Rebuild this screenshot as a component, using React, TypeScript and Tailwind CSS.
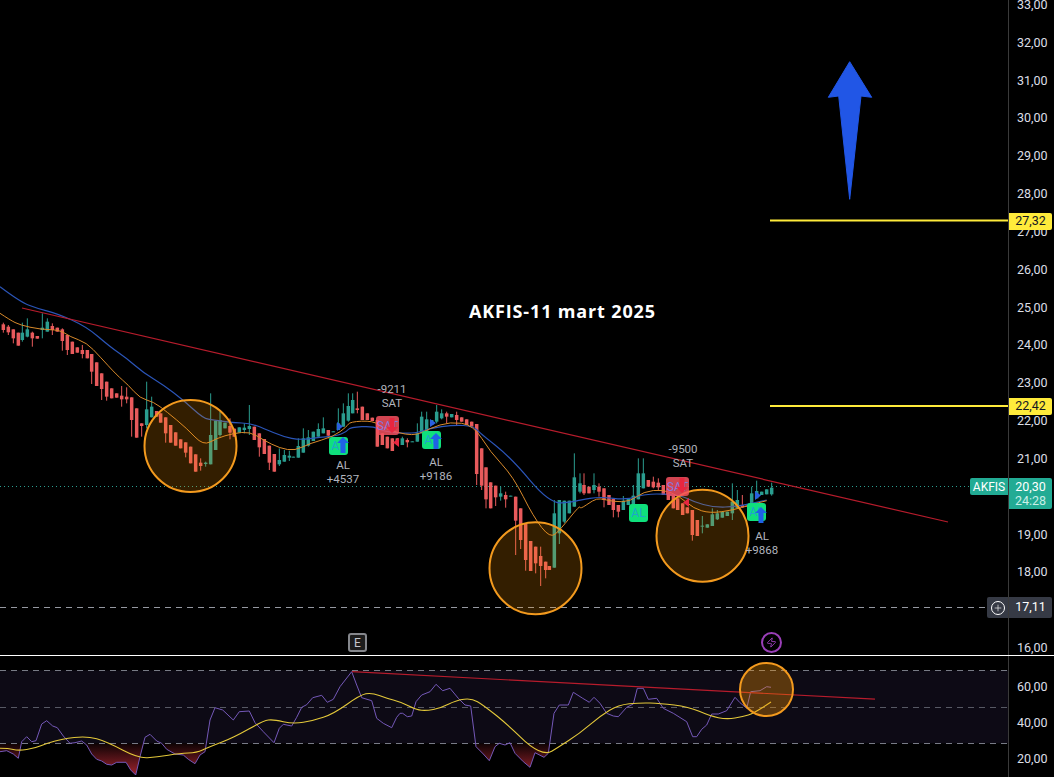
import { Plus, Zap } from 'lucide-react';

type Pt = [number, number];
// [x, up, bodyTop, bodyBottom, wickTop, wickBottom], read off 3x crops
type Row = [number, number, number, number, number?, number?];

const scale = (ox: number, oy: number, pts: Pt[]): Pt[] => pts.map(([x, y]) => [ox + x / 3, oy + y / 3]);
const toPoints = (pts: Pt[]) => pts.map(([x, y]) => x.toFixed(1) + ',' + y.toFixed(1)).join(' ');
// rounds the corners: goes through the midpoints, with each point as control
const smooth = (pts: Pt[]) => {
  let d = 'M' + pts[0][0].toFixed(1) + ' ' + pts[0][1].toFixed(1);
  for (let i = 1; i < pts.length - 1; i++) {
    const mx = (pts[i][0] + pts[i + 1][0]) / 2;
    const my = (pts[i][1] + pts[i + 1][1]) / 2;
    d += 'Q' + pts[i][0].toFixed(1) + ' ' + pts[i][1].toFixed(1) + ' ' + mx.toFixed(1) + ' ' + my.toFixed(1);
  }
  const last = pts[pts.length - 1];
  return d + 'L' + last[0].toFixed(1) + ' ' + last[1].toFixed(1);
};

const part1: Row[] = [
  [10,0,133,150,128,158],[25,0,140,157,135,165],[40,0,148,175,148,190],[55,0,158,197],[67,1,158,180,128,185],[82,1,148,170,115,172],
  [97,0,158,175,155,200],[112,0,168,176],[127,1,143,150,100,175],[142,1,125,155,115,155],[157,0,138,150,130,165],[172,0,143,155],
  [187,0,148,183,145,212],[202,0,165,210,165,225],[217,0,185,222],[232,0,202,218],[247,0,210,222,195,235],[262,0,210,235],
  [275,0,222,275,222,312],[290,0,247,318],[305,0,280,327,280,360],[320,0,305,350,305,362],[335,0,325,355],[350,0,340,353],
  [365,0,347,358,318,380],[380,0,350,358,322,370],[395,0,352,420,352,470],[410,0,385,473],[425,0,430,438,430,470],[440,1,388,435,305,445],
  [455,1,380,412,350,412],[470,0,393,410],[482,0,400,428],[497,0,412,460,412,488],[512,0,435,488],[527,0,457,497],[542,0,478,505],
  [557,0,487,518,487,532],[572,0,500,550],[587,0,523,575],[602,0,548,558,535,572],[617,1,548,552,545,560],[632,1,465,553,340,553],
  [647,1,422,510],[660,1,420,465,395,470],[675,1,428,445],[690,0,438,458,415,478],[703,0,446,470],[718,1,442,458],[733,1,443,450,430,460],
  [748,1,438,447,375,465],[763,0,440,480],[778,0,460,502,460,530],[793,0,477,522],[808,0,497,548,497,570],[823,0,522,575],
  [838,1,540,553,505,558],[853,1,525,545,510,545],[868,1,527,533,512,543],[880,1,530,532],[895,1,498,533,475,533],[910,1,475,518,445,518],
  [925,1,472,497,450,500],[940,1,455,483],[955,1,447,470,430,470],[970,1,445,460,412,460],[985,0,450,467,450,475],[1000,1,454,456],
  [1015,1,430,450,385,450],[1030,1,400,440,370,440],[1045,1,378,422,340,425],[1058,1,360,400,340,400],
];
const part2: Row[] = [
  [52,0,115,120,65,130],[67,0,110,150],[82,0,130,150],[97,0,143,153],[112,0,150,230],[127,0,190,225],[142,0,200,235],[157,0,205,243],
  [172,0,205,215],[187,1,205,225,200,225],[202,0,210,217,205,232],[217,1,214,216],[232,1,190,215,160,215],[245,1,140,190,125,190],
  [260,1,148,185,125,190],[275,1,150,165],[290,1,125,155,105,160],[305,1,130,145,118,148],[320,0,130,140,125,160],[335,1,132,142],
  [350,0,135,150,125,165],[365,0,142,155],[380,0,148,165],[395,0,155,170],[410,0,162,312,162,345],[425,0,235,347,235,360],
  [438,0,292,388,292,415],[452,0,337,415],[467,0,347,382,347,408],[482,1,370,380,350,392],[497,0,375,388,365,413],[512,1,377,379],
  [527,0,380,452,380,555],[542,0,415,510,415,537],[557,0,460,570,460,602],[572,0,513,603],[587,0,530,580,530,610],[602,0,558,588,530,648],
  [617,0,575,600,575,625],[628,0,588,600],[643,1,430,593,390,593],[658,1,390,490,390,522],[673,1,392,455,392,460],[688,1,392,430],
  [703,1,322,410,250,410],
];
const part3: Row[] = [
  [0,1,160,185,130,190],[12,0,165,190,130,195],[27,0,170,190],[42,1,165,180,130,190],[57,0,170,185,160,200],[72,0,175,210,175,232],
  [87,0,195,225],[100,0,207,240,207,262],[115,0,225,245,225,262],[130,1,212,240,198,240],[145,1,205,225],[160,1,197,225,165,230],
  [175,1,130,208,85,208],[190,1,130,175,85,175],[205,0,150,170],[220,0,155,172,140,175],[235,0,158,172,145,180],[250,0,165,195],
  [265,0,190,210],[280,0,195,235],[293,0,205,240],[308,0,220,255],[322,0,232,250],[337,0,240,315,240,332],[352,0,270,318],
  [367,1,287,289,258,310],[382,1,283,293],[397,1,253,288,235,288],[412,1,250,268,240,270],[427,1,245,263],[442,1,245,258],
  [457,1,215,250,160,270],[472,1,210,235,180,235],[487,0,225,232,195,232],[500,0,227,229],[515,1,190,220,170,220],[530,1,183,205,152,205],
  [545,1,185,195],[560,1,178,193],[575,1,173,193,158,197],
];
const candles = [
  ...part1.map((r) => ({ r, ox: 0, oy: 280 })),
  ...part2.map((r) => ({ r, ox: 340, oy: 370 })),
  ...part3.map((r) => ({ r, ox: 580, oy: 430 })),
];

const blue: Pt[] = [
  ...scale(0, 280, [[0,20],[60,65],[110,85],[170,100],[260,140],[330,200],[380,235],[430,278],[490,315],[550,360],[610,415],[640,420],[700,428],[750,430],[790,445],[850,470],[900,480],[960,472],[1010,468],[1040,455]]),
  ...scale(340, 370, [[30,172],[100,168],[130,185],[220,192],[270,175],[340,165],[400,168],[420,190],[510,260],[630,402],[700,395]]),
  ...scale(580, 430, [[0,210],[60,200],[140,210],[200,190],[300,195],[340,215],[400,232],[470,230],[560,210]]),
];
const orange: Pt[] = [
  ...scale(0, 280, [[0,100],[30,120],[60,135],[120,148],[180,150],[210,170],[260,188],[300,230],[350,285],[385,315],[420,355],[460,365],[500,395],[560,445],[610,497],[650,475],[700,460],[750,455],[790,480],[840,505],[885,512],[930,490],[1000,470],[1040,440]]),
  ...scale(340, 370, [[30,155],[100,152],[130,175],[220,200],[270,175],[330,155],[400,165],[450,245],[520,320],[580,440],[630,505],[660,480],[720,405]]),
  ...scale(580, 430, [[0,238],[40,210],[60,205],[100,215],[150,215],[190,185],[250,178],[300,200],[340,235],[390,250],[460,240],[510,225],[560,212]]),
];
const rsi: Pt[] = [
  ...scale(0, 630, [[0,365],[20,362],[40,372],[55,385],[65,335],[80,320],[95,335],[108,332],[125,282],[140,272],[158,288],[172,293],[190,318],[210,340],[225,338],[245,333],[260,345],[275,372],[290,388],[305,393],[320,403],[335,405],[350,397],[378,397],[392,420],[407,435],[420,380],[435,322],[450,313],[470,333],[485,340],[500,358],[525,372],[550,375],[565,388],[585,401],[600,375],[615,365],[630,270],[645,233],[668,240],[700,270],[718,245],[748,243],[765,278],[790,305],[822,338],[838,295],[850,283],[875,288],[890,262],[905,232],[920,224],[938,203],[965,196],[982,217],[1000,208],[1020,170],[1055,125],[1070,165],[1085,203],[1115,212],[1130,265],[1150,280],[1175,293],[1190,262]]),
  ...scale(400, 630, [[0,250],[8,250],[22,260],[35,258],[48,215],[65,195],[90,185],[108,163],[128,182],[150,175],[175,205],[195,225],[212,228],[228,350],[250,372],[268,392],[285,350],[298,340],[315,345],[330,338],[345,370],[370,395],[390,412],[405,368],[432,382],[445,370],[462,250],[478,225],[505,225],[520,187],[548,205],[568,217],[582,202],[600,220],[620,250],[640,258],[655,260],[680,232],[700,222],[712,175],[730,175],[745,208],[770,205],[790,235],[820,250],[860,275],[878,320],[890,320],[905,298],[920,285],[935,252],[955,252],[980,242],[1005,202],[1020,218],[1040,235],[1052,185],[1080,182],[1100,170],[1113,172]]),
];
const rsiMa: Pt[] = [
  ...scale(0, 630, [[0,355],[25,355],[55,362],[105,355],[140,340],[185,327],[260,318],[320,335],[415,385],[470,381],[540,370],[590,368],[625,352],[700,323],[790,272],[820,268],[880,282],[940,272],[1000,252],[1080,195],[1115,188],[1160,205]]),
  ...scale(400, 630, [[0,215],[50,240],[80,242],[120,235],[170,210],[215,205],[250,225],[330,290],[390,350],[440,373],[470,355],[540,310],[600,258],[655,225],[720,218],[780,220],[865,230],[930,258],[980,268],[1030,260],[1060,250],[1113,216]]),
];

// 20,00 and 17,00 sit under the price tags, their rows stay empty
const axisValues = [33, 32, 31, 30, 29, 28, 27, 26, 25, 24, 23, 22, 21, 0, 19, 18, 0, 16];

const upArrow = (cx: number, t: number, b: number) =>
  'M' + cx + ' ' + t + 'L' + (cx + 6) + ' ' + (t + 6) + 'H' + (cx + 2.5) + 'V' + b + 'H' + (cx - 2.5) + 'V' + (t + 6) + 'H' + (cx - 6) + 'Z';
const downArrow = (cx: number, t: number, b: number) =>
  'M' + cx + ' ' + b + 'L' + (cx + 6) + ' ' + (b - 6) + 'H' + (cx + 2.5) + 'V' + t + 'H' + (cx - 2.5) + 'V' + (b - 6) + 'H' + (cx - 6) + 'Z';

const AlBox = ({ x, y }: { x: number; y: number }) => (
  <div className="absolute flex h-[18px] w-[19px] items-center justify-center rounded-[3px] bg-[#0fe07c] text-[12px] text-[#1fa5cc]" style={{ left: x, top: y }}>
    AL
  </div>
);
const SatBox = ({ x, y }: { x: number; y: number }) => (
  <div className="absolute flex h-[19px] w-[23px] items-center justify-center rounded-[3px] bg-[#f4515f]/85 text-[12px] text-[#8d74dc]" style={{ left: x, top: y }}>
    SAT
  </div>
);
const Note = ({ x, y, lines }: { x: number; y: number; lines: string[] }) => (
  <div className="absolute w-[60px] text-center text-[11.5px] leading-[14px] text-[#b2b5be]" style={{ left: x - 30, top: y }}>
    {lines.map((l) => (
      <div key={l}>{l}</div>
    ))}
  </div>
);

export default function App() {
  return (
    <div className="flex h-[777px] w-[1054px] flex-col overflow-hidden bg-black font-['Roboto',sans-serif] text-[12.5px] text-[#dcdfe6]">
      <div className="relative flex h-[655px] shrink-0">
        <div className="h-full w-[1008px] shrink-0">
          <svg width="1008" height="655" className="block">
            <line x1="0" y1="486.5" x2="970" y2="486.5" stroke="#2a9d8f" strokeWidth="1" strokeDasharray="1 3" />
            <line x1="0" y1="607.5" x2="987" y2="607.5" stroke="#9598a1" strokeWidth="1" strokeDasharray="6 5" />
            <line x1="770" y1="220.5" x2="1008" y2="220.5" stroke="#ffeb3b" strokeWidth="2" />
            <line x1="770" y1="406" x2="1008" y2="406" stroke="#ffeb3b" strokeWidth="2" />
            {candles.map(({ r, ox, oy }, i) => {
              const [zx, up, top, bottom, wt, wb] = r;
              const x = ox + zx / 3;
              const color = up ? '#2a9d8f' : '#e85a5c';
              return (
                <g key={i} fill={color}>
                  <rect x={x - 0.5} y={oy + (wt ?? top) / 3} width="1" height={((wb ?? bottom) - (wt ?? top)) / 3} />
                  <rect x={x - 1.75} y={oy + top / 3} width="3.5" height={Math.max((bottom - top) / 3, 1)} />
                </g>
              );
            })}
            <path d={smooth(blue)} fill="none" stroke="#2b55b8" strokeWidth="1.2" />
            <path d={smooth(orange)} fill="none" stroke="#d98a2b" strokeWidth="1" />
            <line x1="22" y1="308" x2="948" y2="522" stroke="#b71c2c" strokeWidth="1.2" />
            <circle cx="190.5" cy="446" r="46" fill="#ff9800" fillOpacity="0.2" stroke="#f39a1e" strokeWidth="2" />
            <circle cx="535.5" cy="568.3" r="46" fill="#ff9800" fillOpacity="0.2" stroke="#f39a1e" strokeWidth="2" />
            <circle cx="702.5" cy="535.7" r="46" fill="#ff9800" fillOpacity="0.2" stroke="#f39a1e" strokeWidth="2" />
            <path d="M849.7 61.7L871.7 97.3L861 96L849.7 199.3L838.7 96L828.3 97.3Z" fill="#2156e6" stroke="#2156e6" strokeWidth="1" strokeLinejoin="round" />
          </svg>
        </div>

        <div className="h-full w-[46px] shrink-0 overflow-hidden border-l border-[#3a3a3a]">
          <div className="-mt-[14px] flex flex-col pl-2">
            {axisValues.map((v, i) => (
              <div key={i} className="flex h-[37.83px] shrink-0 items-center leading-[10px]">
                {v ? v + ',00' : ''}
              </div>
            ))}
          </div>
        </div>

        <AlBox x={329} y={437} />
        <AlBox x={422} y={431} />
        <AlBox x={629} y={504} />
        <AlBox x={747} y={503} />
        <SatBox x={376} y={416} />
        <SatBox x={666} y={477} />

        <svg width="1008" height="655" className="absolute left-0 top-0">
          <path d={upArrow(343, 437, 453)} fill="#1f62e6" />
          <path d={upArrow(436, 433, 449)} fill="#1f62e6" />
          <path d={upArrow(761, 507, 523)} fill="#1f62e6" />
          <path d={downArrow(392, 418, 433)} fill="#e8263f" />
          <path d={downArrow(682, 478, 493)} fill="#e8263f" />
          <path d="M337 422L343 426.5L337 431Z" fill="#2a5fe0" />
          <path d="M430 419L436 423L430 427Z" fill="#2a5fe0" />
          <path d="M755 491L761 495.5L755 500Z" fill="#2a5fe0" />
          <path d="M399 438L393 442.5L399 447Z" fill="#e8263f" />
          <path d="M689 498L683 502.5L689 507Z" fill="#e8263f" />
        </svg>

        <Note x={343} y={458} lines={['AL', '+4537']} />
        <Note x={436} y={455} lines={['AL', '+9186']} />
        <Note x={762} y={529} lines={['AL', '+9868']} />
        <Note x={392} y={382} lines={['-9211', 'SAT']} />
        <Note x={683} y={442} lines={['-9500', 'SAT']} />

        <div className="absolute left-[469px] top-[299px] font-['Open_Sans',sans-serif] text-[18px] font-bold leading-6 tracking-[0.85px] text-white">
          AKFIS-11 mart 2025
        </div>

        <div className="absolute left-[1009px] top-[213px] flex h-[17px] w-[43px] items-center justify-center rounded-r-[2px] bg-[#ffeb3b] text-[#131722]">27,32</div>
        <div className="absolute left-[1009px] top-[398px] flex h-[17px] w-[43px] items-center justify-center rounded-r-[2px] bg-[#ffeb3b] text-[#131722]">22,42</div>

        <div className="absolute left-[970px] top-[478px] flex items-start gap-px text-white">
          <div className="flex h-[17px] w-[38px] items-center justify-center rounded-l-[2px] bg-[#22ab94] text-[12px]">AKFIS</div>
          <div className="flex h-[31px] w-[43px] flex-col items-center justify-center rounded-r-[2px] bg-[#22ab94] leading-[14px]">
            <span>20,30</span>
            <span className="text-[#c9efe8]">24:28</span>
          </div>
        </div>

        <div className="absolute left-[987px] top-[597px] flex h-[21px] gap-px text-white">
          <div className="flex w-[21px] items-center justify-center rounded-l-[2px] bg-[#363a45]">
            <span className="flex h-[14px] w-[14px] items-center justify-center rounded-full border border-white">
              <Plus size={10} strokeWidth={1.5} color="#ffffff" />
            </span>
          </div>
          <div className="flex w-[43px] items-center justify-center rounded-r-[2px] bg-[#363a45]">17,11</div>
        </div>

        <div className="absolute left-[348px] top-[633px] flex h-[19px] w-[19px] items-center justify-center rounded-[3px] border-2 border-[#85878c] bg-[#1c1c1c] text-[12px] text-[#c4c6cc]">E</div>
        <div className="absolute left-[761px] top-[632px] flex h-[21px] w-[21px] items-center justify-center rounded-full border-2 border-[#9a3fb8] text-[#9a3fb8]">
          <Zap size={11} strokeWidth={2} />
        </div>
      </div>

      <div className="h-px shrink-0 bg-white" />

      <div className="flex h-[121px] shrink-0">
        <div className="h-full w-[1008px] shrink-0">
          <svg width="1008" height="121" viewBox="0 656 1008 121" className="block">
            <defs>
              <linearGradient id="oversold" gradientUnits="userSpaceOnUse" x1="0" y1="743" x2="0" y2="777">
                <stop offset="0" stopColor="#f23645" stopOpacity="0.05" />
                <stop offset="1" stopColor="#f23645" stopOpacity="0.7" />
              </linearGradient>
              <clipPath id="below30">
                <rect x="0" y="743.3" width="1008" height="34" />
              </clipPath>
            </defs>
            <rect x="0" y="670.3" width="1008" height="73" fill="#0d0a15" />
            <polygon points={'0,743.3 ' + toPoints(rsi) + ' 771,743.3'} fill="url(#oversold)" clipPath="url(#below30)" />
            <line x1="0" y1="670.5" x2="1008" y2="670.5" stroke="#787b86" strokeDasharray="6 5" />
            <line x1="0" y1="707.5" x2="1008" y2="707.5" stroke="#787b86" strokeOpacity="0.7" strokeDasharray="6 5" />
            <line x1="0" y1="743.5" x2="1008" y2="743.5" stroke="#787b86" strokeDasharray="6 5" />
            <polyline points={toPoints(rsi)} fill="none" stroke="#7458b8" strokeWidth="1" strokeLinejoin="round" />
            <path d={smooth(rsiMa)} fill="none" stroke="#e3c83a" strokeWidth="1.1" />
            <line x1="352" y1="671.7" x2="875" y2="699.2" stroke="#b71c2c" strokeWidth="1.2" />
            <circle cx="766.5" cy="689.5" r="26.5" fill="#ff9800" fillOpacity="0.32" stroke="#f39a1e" strokeWidth="2" />
          </svg>
        </div>
        <div className="flex h-full w-[46px] shrink-0 flex-col border-l border-[#3a3a3a] pl-2 pt-[13px]">
          {[60, 40, 20].map((v) => (
            <div key={v} className="flex h-[36px] shrink-0 items-center">
              {v},00
            </div>
          ))}
        </div>
      </div>
    </div>
  );
}
